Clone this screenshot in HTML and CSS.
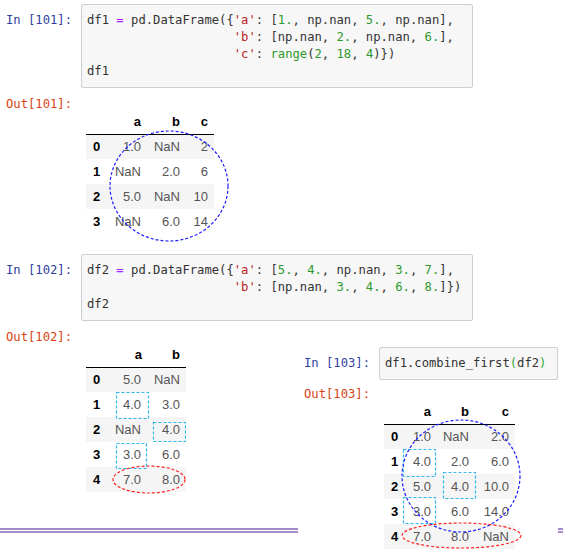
FILE: index.html
```html
<!DOCTYPE html>
<html lang="en">
<head>
    <meta charset="UTF-8">
    <title>combine_first</title>
    <link rel="stylesheet" href="styles.css">
</head>
<body>
<div class="notebook">

    <!-- In [101] -->
    <div class="cell">
        <div class="prompt in">In&nbsp;[101]:</div>
        <div class="input">
            <div class="ln">df1 <span class="op">=</span> pd.DataFrame({<span class="str">'a'</span>: [<span class="num">1.</span>, np.nan, <span class="num">5.</span>, np.nan],</div>
            <div class="ln">                    <span class="str">'b'</span>: [np.nan, <span class="num">2.</span>, np.nan, <span class="num">6.</span>],</div>
            <div class="ln">                    <span class="str">'c'</span>: <span class="bi">range</span>(<span class="num">2</span>, <span class="num">18</span>, <span class="num">4</span>)})</div>
            <div class="ln">df1</div>
        </div>
    </div>
    <div class="output">
        <div class="prompt out">Out[101]:</div>
        <div class="result">
            <div class="frame">
                <table class="df df1">
                    <colgroup><col class="w27"><col class="w34"><col class="w39"><col class="w28"></colgroup>
                    <thead><tr><th></th><th>a</th><th>b</th><th>c</th></tr></thead>
                    <tbody>
                        <tr><th>0</th><td>1.0</td><td>NaN</td><td>2</td></tr>
                        <tr><th>1</th><td>NaN</td><td>2.0</td><td>6</td></tr>
                        <tr><th>2</th><td>5.0</td><td>NaN</td><td>10</td></tr>
                        <tr><th>3</th><td>NaN</td><td>6.0</td><td>14</td></tr>
                    </tbody>
                </table>
                <svg class="marks" width="128" height="126">
                    <ellipse class="blue" cx="83" cy="77" rx="59" ry="55"/>
                </svg>
            </div>
        </div>
    </div>

    <!-- In [102] -->
    <div class="cell next">
        <div class="prompt in">In&nbsp;[102]:</div>
        <div class="input">
            <div class="ln">df2 <span class="op">=</span> pd.DataFrame({<span class="str">'a'</span>: [<span class="num">5.</span>, <span class="num">4.</span>, np.nan, <span class="num">3.</span>, <span class="num">7.</span>],</div>
            <div class="ln">                    <span class="str">'b'</span>: [np.nan, <span class="num">3.</span>, <span class="num">4.</span>, <span class="num">6.</span>, <span class="num">8.</span>]})</div>
            <div class="ln">df2</div>
        </div>
    </div>
    <div class="output">
        <div class="prompt out">Out[102]:</div>
        <div class="result">
            <div class="frame">
                <table class="df df2">
                    <colgroup><col class="w26"><col class="w36"><col class="w38"></colgroup>
                    <thead><tr><th></th><th>a</th><th>b</th></tr></thead>
                    <tbody>
                        <tr><th>0</th><td>5.0</td><td>NaN</td></tr>
                        <tr><th>1</th><td>4.0</td><td>3.0</td></tr>
                        <tr><th>2</th><td>NaN</td><td>4.0</td></tr>
                        <tr><th>3</th><td>3.0</td><td>6.0</td></tr>
                        <tr><th>4</th><td>7.0</td><td>8.0</td></tr>
                    </tbody>
                </table>
                <svg class="marks" width="100" height="152">
                    <rect class="cyan" x="30.5" y="50.5" width="32" height="26"/>
                    <rect class="cyan" x="67.5" y="80.5" width="32" height="19"/>
                    <rect class="cyan" x="30.5" y="101.5" width="30" height="25"/>
                    <ellipse class="red" cx="63" cy="137.5" rx="36" ry="13.5"/>
                </svg>
            </div>
        </div>
    </div>

    <div class="divider"></div>

    <!-- In [103], pasted over the right side -->
    <div class="side">
        <div class="cell">
            <div class="prompt in">In&nbsp;[103]:</div>
            <div class="input one">
                <div class="ln">df1.combine_first<span class="match">(</span>df2<span class="match">)</span></div>
            </div>
        </div>
        <div class="output near">
            <div class="prompt out">Out[103]:</div>
            <div class="result">
                <div class="frame">
                    <table class="df df3">
                        <colgroup><col class="w20"><col class="w33"><col class="w38"><col class="w40"></colgroup>
                        <thead><tr><th></th><th>a</th><th>b</th><th>c</th></tr></thead>
                        <tbody>
                            <tr><th>0</th><td>1.0</td><td>NaN</td><td>2.0</td></tr>
                            <tr><th>1</th><td>4.0</td><td>2.0</td><td>6.0</td></tr>
                            <tr><th>2</th><td>5.0</td><td>4.0</td><td>10.0</td></tr>
                            <tr><th>3</th><td>3.0</td><td>6.0</td><td>14.0</td></tr>
                            <tr><th>4</th><td>7.0</td><td>8.0</td><td>NaN</td></tr>
                        </tbody>
                    </table>
                    <svg class="marks" width="140" height="152">
                        <rect class="cyan" x="19.5" y="50.5" width="32" height="27"/>
                        <rect class="cyan" x="59.5" y="73.5" width="32" height="26"/>
                        <rect class="cyan" x="19.5" y="98.5" width="32" height="26"/>
                        <ellipse class="blue" cx="77" cy="77" rx="59" ry="56"/>
                        <ellipse class="red" cx="77.5" cy="136.5" rx="59.5" ry="12.5"/>
                    </svg>
                </div>
            </div>
        </div>
    </div>

</div>
</body>
</html>
```

FILE: styles.css
```css
body {
    margin: 0;
    background: #fff;
    font-family: "Liberation Sans", Arial, sans-serif;
}
.notebook {
    position: relative;
    width: 563px;
    height: 556px;
    overflow: hidden;
    padding-top: 4px;
    box-sizing: border-box;
}

/* cells */
.cell {
    display: flex;
    align-items: flex-start;
}
.cell.next {
    margin-top: 20px;
}
.prompt {
    flex: none;
    width: 81px;
    box-sizing: border-box;
    padding: 8px 9px 0 0;
    text-align: right;
    font-family: "DejaVu Sans Mono", monospace;
    font-size: 12.2px;
    line-height: 17px;
    white-space: nowrap;
}
.prompt.in {
    color: #303f9f;
}
.prompt.out {
    color: #d84315;
    padding-top: 0;
}
.input {
    width: 392px;
    box-sizing: border-box;
    padding: 7px 5px;
    background: #f7f7f7;
    border: 1px solid #cfcfcf;
    border-radius: 2px;
    font-family: "DejaVu Sans Mono", monospace;
    font-size: 12.2px;
    line-height: 17px;
    color: #333;
}
.ln {
    height: 17px;
    white-space: pre;
}
.input.one {
    width: 179px;
    overflow: hidden;
}
.op { color: #aa22ff; }
.str { color: #ba2121; }
.num { color: #2e9a2e; }
.bi { color: #2e9a2e; }
.match { color: #33aa33; }

/* outputs */
.output {
    display: flex;
    align-items: flex-start;
    margin-top: 8px;
}
.output.near {
    margin-top: 6px;
}
.result {
    padding: 13px 0 0 5px;
}
.frame {
    position: relative;
}

/* dataframes */
.df {
    border-collapse: collapse;
    table-layout: fixed;
    font-size: 13px;
    color: #555;
}
.df1 { width: 128px; }
.df2 { width: 100px; }
.df3 { width: 131px; }
.w20 { width: 20px; }
.w26 { width: 26px; }
.w27 { width: 27px; }
.w28 { width: 28px; }
.w33 { width: 33px; }
.w34 { width: 34px; }
.w36 { width: 36px; }
.w38 { width: 38px; }
.w39 { width: 39px; }
.w40 { width: 40px; }
.df th,
.df td {
    height: 25px;
    padding: 0 6px 0 0;
    text-align: right;
    white-space: nowrap;
    box-sizing: border-box;
}
.df thead th {
    color: #000;
    font-weight: bold;
    border-bottom: 1px solid #000;
    height: 25px;
}
.df tbody th {
    color: #000;
    font-weight: bold;
    text-align: left;
    padding-left: 7px;
}
.df2 tbody td:nth-child(2) {
    padding-right: 7px;
}
.df tbody tr:nth-child(odd) {
    background: #f5f5f5;
}

/* hand-drawn annotations */
.marks {
    position: absolute;
    top: 0;
    left: 0;
    overflow: visible;
    pointer-events: none;
}
.marks ellipse,
.marks rect {
    fill: none;
    stroke-width: 1.2;
    stroke-dasharray: 3 2;
}
.blue { stroke: #1f1fff; }
.cyan { stroke: #2eb8ee; }
.red { stroke: #f22; }

/* cell separator and the pasted cell */
.divider {
    margin-top: 36px;
    height: 1px;
    border-top: 2px solid #a58bcb;
    border-bottom: 2px solid #a58bcb;
}
.side {
    position: absolute;
    left: 298px;
    top: 343px;
    width: 260px;
    height: 213px;
    padding-top: 4px;
    box-sizing: border-box;
    background: #fff;
}
```
